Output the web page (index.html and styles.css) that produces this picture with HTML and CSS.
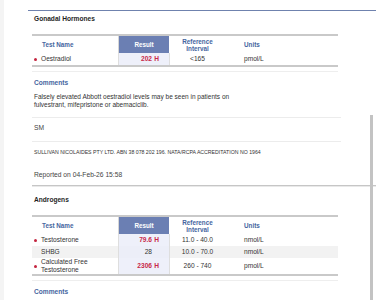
FILE: index.html
```html
<!DOCTYPE html>
<html lang="en">
<head>
<meta charset="utf-8">
<title>Pathology Report</title>
<link rel="stylesheet" href="styles.css">
</head>
<body>
<div class="page">
  <div class="rule-top"></div>

  <section class="panel">
    <h2 class="panel-title">Gonadal Hormones</h2>
    <div class="tbl-wrap">
      <table class="results">
        <thead>
          <tr>
            <th class="c-name">Test Name</th>
            <th class="c-result">Result</th>
            <th class="c-ref">Reference<br>Interval</th>
            <th class="c-units">Units</th>
          </tr>
        </thead>
        <tbody>
          <tr>
            <td class="c-name"><span class="dot"></span>Oestradiol</td>
            <td class="c-result hi">202<span class="flag">H</span></td>
            <td class="c-ref">&lt;165</td>
            <td class="c-units">pmol/L</td>
          </tr>
        </tbody>
      </table>
    </div>
    <h3 class="comments-title">Comments</h3>
    <p class="comment">Falsely elevated Abbott oestradiol levels may be seen in patients on<br>fulvestrant, mifepristone or abemaciclib.</p>
    <div class="signoff">SM</div>
    <div class="lab">SULLIVAN NICOLAIDES PTY LTD. ABN 38 078 202 196. NATA/RCPA ACCREDITATION NO 1964</div>
    <div class="reported">Reported on 04-Feb-26 15:58</div>
  </section>

  <section class="panel">
    <h2 class="panel-title">Androgens</h2>
    <div class="tbl-wrap">
      <table class="results">
        <thead>
          <tr>
            <th class="c-name">Test Name</th>
            <th class="c-result">Result</th>
            <th class="c-ref">Reference<br>Interval</th>
            <th class="c-units">Units</th>
          </tr>
        </thead>
        <tbody>
          <tr>
            <td class="c-name"><span class="dot"></span>Testosterone</td>
            <td class="c-result hi">79.6<span class="flag">H</span></td>
            <td class="c-ref">11.0 - 40.0</td>
            <td class="c-units">nmol/L</td>
          </tr>
          <tr class="stripe">
            <td class="c-name">SHBG</td>
            <td class="c-result">28<span class="flag"></span></td>
            <td class="c-ref">10.0 - 70.0</td>
            <td class="c-units">nmol/L</td>
          </tr>
          <tr>
            <td class="c-name"><span class="dot"></span>Calculated Free<br>Testosterone</td>
            <td class="c-result hi">2306<span class="flag">H</span></td>
            <td class="c-ref">260 - 740</td>
            <td class="c-units">pmol/L</td>
          </tr>
        </tbody>
      </table>
    </div>
    <h3 class="comments-title">Comments</h3>
  </section>

  <div class="scroll-thumb"></div>
</div>
</body>
</html>
```

FILE: styles.css
```css
html, body {
  margin: 0;
  padding: 0;
}

body {
  background: #f4f4f4;
  font-family: "Liberation Sans", Arial, sans-serif;
  color: #333;
  overflow: hidden;
}

.page {
  position: relative;
  margin-left: 4px;
  background: #fff;
  height: 300px;
  padding: 10px 0 0 24px;
  box-sizing: border-box;
  overflow: hidden;
}

.rule-top {
  border-top: 1px solid #6f82ae;
}

.panel {
  margin-left: 4px;
  padding-bottom: 6px;
  border-bottom: 1px solid #c6c6c6;
  box-shadow: 0 1px 0 #e9e9e9;
}

.panel + .panel {
  margin-top: 10px;
}

.panel-title {
  margin: 4px 0 0 2px;
  font-size: 6.6px;
  line-height: 8px;
  font-weight: 700;
  color: #1f1f1f;
}

.tbl-wrap {
  width: 306px;
  margin-top: 11px;
  padding-bottom: 4px;
  border-bottom: 1px solid #eeeeee;
}

.results {
  width: 306px;
  border-collapse: collapse;
  table-layout: fixed;
  border-top: 2px solid #c9c9c9;
  border-bottom: 2px solid #c9c9c9;
}

.results th {
  height: 17px;
  padding: 0;
  font-size: 6.3px;
  line-height: 7px;
  font-weight: 700;
  color: #4565a0;
  text-align: center;
}

.results td {
  height: 12px;
  padding: 0;
  font-size: 6.6px;
  line-height: 8px;
  color: #333;
}

.results th.c-name {
  width: 76px;
  text-align: left;
  padding-left: 10px;
}

.results th.c-result {
  width: 50px;
  background: #6b7fb3;
  color: #fff;
  border-left: 1px solid #d6d6d6;
  border-right: 1px solid #fff;
}

.results th.c-ref {
  width: 55px;
}

.results th.c-units {
  text-align: left;
  padding-left: 19px;
}

.results td.c-name {
  position: relative;
  padding-left: 9px;
}

.dot {
  position: absolute;
  left: 2px;
  top: 50%;
  width: 3px;
  height: 3px;
  margin-top: -1.5px;
  border-radius: 50%;
  background: #c4243f;
}

.results td.c-result {
  background: #eef0fa;
  text-align: right;
  padding-right: 10px;
  border-left: 1px solid #dedede;
  border-right: 1px solid #dedede;
}

.results td.hi {
  color: #c8284a;
  font-weight: 700;
}

.flag {
  display: inline-block;
  width: 7px;
  text-align: right;
}

.results td.c-ref {
  text-align: center;
}

.results td.c-units {
  padding-left: 19px;
}

.results tr.stripe td {
  background: #f2f2f2;
}

.results tr.stripe td.c-result {
  background: #eceef8;
}

.comments-title {
  margin: 7px 0 0 2px;
  font-size: 6.6px;
  line-height: 8px;
  font-weight: 700;
  color: #4565a0;
}

.comment {
  margin: 6px 0 0 2px;
  font-size: 6.5px;
  line-height: 8px;
  color: #333;
}

.signoff {
  width: 307px;
  margin-top: 8px;
  padding: 6px 0 9px 2px;
  border-top: 1px solid #ececec;
  font-size: 6.7px;
  line-height: 8px;
  color: #444;
}

.lab {
  width: 307px;
  padding: 7px 0 0 2px;
  border-top: 1px solid #ececec;
  font-size: 5.2px;
  line-height: 6px;
  color: #333;
}

.reported {
  margin: 16px 0 0 2px;
  font-size: 6.7px;
  line-height: 8px;
  color: #444;
}

.scroll-thumb {
  position: absolute;
  right: 3px;
  top: 115px;
  width: 3px;
  height: 200px;
  background: #c3c3c3;
}
```
